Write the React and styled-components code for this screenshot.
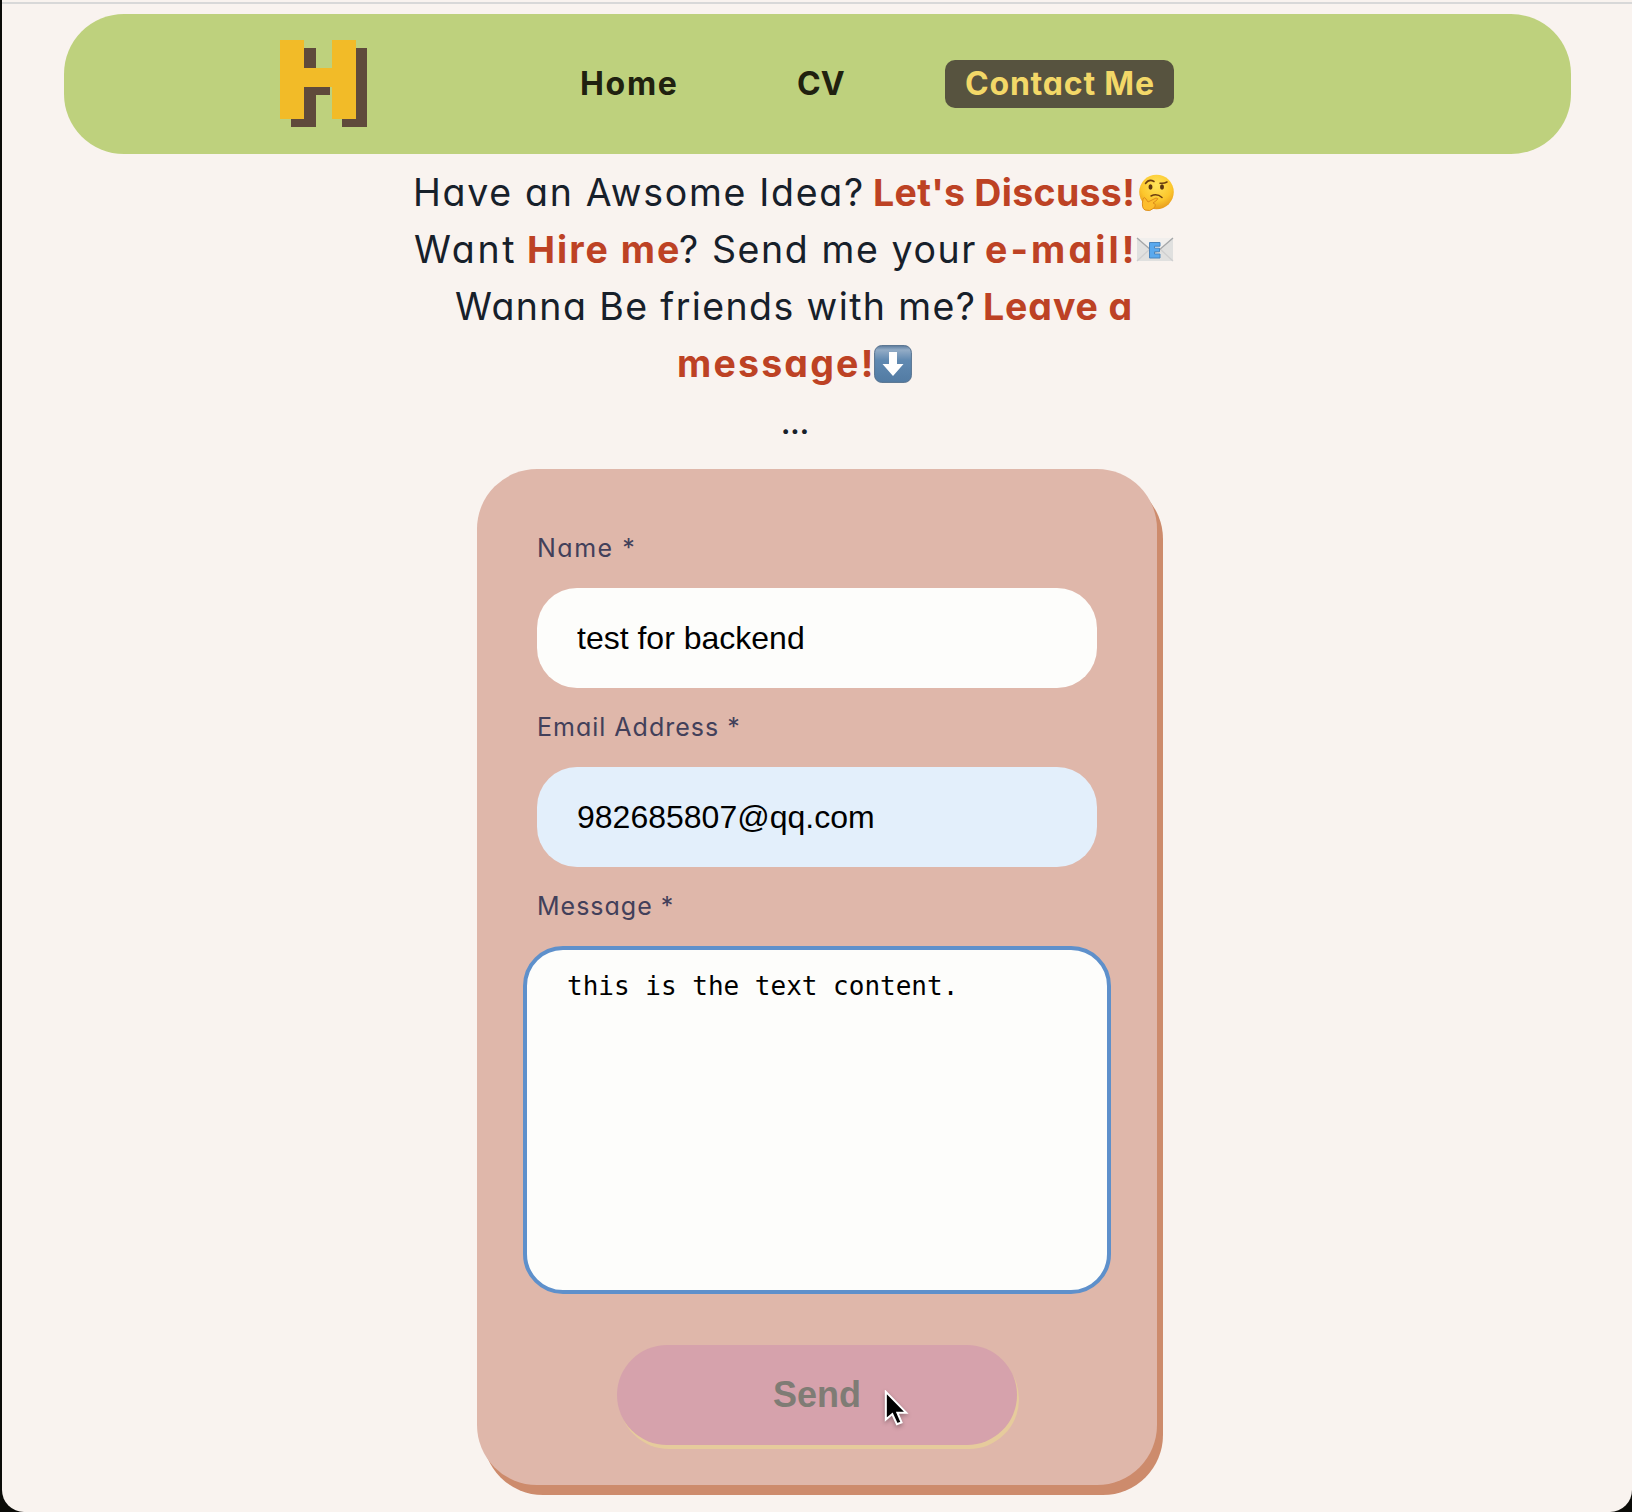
import React from "react";
import styled, { createGlobalStyle } from "styled-components";

const GlobalStyle = createGlobalStyle`
  *, *::before, *::after { box-sizing: border-box; }
  body { margin: 0; background: #000; }
`;

const geometric = `Inter, "Open Sans", sans-serif`;
const arial = `"Liberation Sans", Arial, sans-serif`;

const Page = styled.div`
  height: 1512px;
  padding-left: 2px;
  background: #0b0b08;
  font-family: ${geometric};
  font-feature-settings: "cv11" 1;
`;

const Window = styled.div`
  height: 1512px;
  padding-top: 2px;
  background: #f9f3ef;
  border-radius: 0 0 22px 22px;
  overflow: hidden;
`;

const Divider = styled.div`
  height: 2px;
  background: #d8d8d8;
`;

const Nav = styled.nav`
  display: flex;
  align-items: center;
  width: 1507px;
  height: 140px;
  margin: 10px 0 0 62px;
  padding-left: 216px;
  border-radius: 60px;
  background: #bed17d;
`;

const Logo = styled.svg`
  display: block;
  flex: none;
  width: 88px;
  height: 88px;
  margin-right: 192px;
`;

const NavLink = styled.a`
  flex: none;
  width: ${(p) => p.$width}px;
  height: 48px;
  margin-right: ${(p) => p.$gap || 0}px;
  padding-left: 20px;
  border-radius: 10px;
  background: ${(p) => (p.$active ? "#57533f" : "transparent")};
  color: ${(p) => (p.$active ? "#f3d868" : "#20210f")};
  font-size: 32px;
  font-weight: 700;
  line-height: 47px;
  letter-spacing: ${(p) => p.$track || 0}px;
  white-space: nowrap;
`;

const Intro = styled.header`
  display: flex;
  flex-direction: column;
  margin-top: 10px;
  color: #17202a;
  font-size: 37.5px;
  line-height: 57px;
`;

const Line = styled.div`
  display: flex;
  align-items: center;
  height: 57px;
  padding-left: ${(p) => p.$indent - 2}px;
  white-space: pre;
`;

const Words = styled.span`
  flex: none;
  width: ${(p) => p.$width}px;
  letter-spacing: ${(p) => p.$track || 0}px;
`;

const Strong = styled(Words)`
  color: #bd4224;
  font-weight: 700;
`;

const Emoji = styled.svg`
  display: block;
  flex: none;
  width: 38px;
  height: 38px;
`;

const Dots = styled.div`
  height: 72px;
  padding: 14px 0 0 779px;
  font-size: 28px;
  font-weight: 700;
  line-height: 36px;
  color: #17202a;
`;

const Card = styled.form`
  display: flex;
  flex-direction: column;
  width: 680px;
  height: 1016px;
  margin: 5px 0 0 475px;
  padding: 60px 60px 40px;
  border-radius: 60px;
  background: #dfb7aa;
  box-shadow: 6px 10px 0 #cd8b6c;
`;

const Label = styled.label`
  height: 39px;
  margin-bottom: 20px;
  color: #42405a;
  font-size: 25px;
  line-height: 38px;
  letter-spacing: ${(p) => p.$track || 0}px;
`;

const Input = styled.input`
  width: 560px;
  height: 100px;
  margin: 0 0 20px;
  padding: 0 40px;
  border: 0;
  border-radius: 40px;
  outline: 0;
  background: ${(p) => (p.$filled ? "#e3effb" : "#fdfdfb")};
  color: #000;
  font: 32px ${arial};
`;

const Message = styled.textarea`
  display: block;
  width: 588px;
  height: 348px;
  margin: 0 0 51px -14px;
  padding: 21px 40px;
  border: 4px solid #5e90cb;
  border-radius: 40px;
  outline: 0;
  resize: none;
  overflow: hidden;
  background: #fdfdfb;
  color: #000;
  font: 26px/31px "DejaVu Sans Mono", monospace;
`;

const SendButton = styled.button`
  position: relative;
  align-self: center;
  width: 400px;
  height: 100px;
  padding: 0;
  border: 0;
  border-radius: 50px;
  background: #d6a2ac;
  box-shadow: 2px 4px 0 #e6cb9c;
  color: #7f7c75;
  font: bold 36px ${arial};
`;

const Pointer = styled.svg`
  position: absolute;
  left: 266px;
  top: 45px;
  width: 26px;
  height: 37px;
  filter: drop-shadow(0 2px 2px rgba(0, 0, 0, 0.3));
`;

function ThinkingFace() {
  return (
    <Emoji viewBox="0 0 38 38">
      <defs>
        <radialGradient id="skin" cx="50%" cy="30%" r="70%">
          <stop offset="0" stopColor="#ffe45a" />
          <stop offset="0.65" stopColor="#fcc62c" />
          <stop offset="1" stopColor="#e79a1c" />
        </radialGradient>
      </defs>
      <circle cx="19.5" cy="18" r="17.3" fill="url(#skin)" />
      <ellipse cx="13.5" cy="13" rx="2" ry="2.7" fill="#5b3510" />
      <ellipse cx="25" cy="13" rx="2" ry="2.7" fill="#5b3510" />
      <path d="M8.5 9.5Q12 4.5 17 7.5M23 9.2Q27 9.8 30 8M14 22Q20 19 25 23.5" fill="none" stroke="#6b3d10" strokeWidth="1.5" strokeLinecap="round" />
      <path d="M6 25Q7 22 9 25L11 28 19 24Q22 24 20 26L16 29Q20 30 17 34Q13 38 8 36Q4 34 6 25Z" fill="#fdbd2c" stroke="#dd8e1c" strokeWidth="1" />
    </Emoji>
  );
}

function EmailEnvelope() {
  return (
    <Emoji viewBox="0 0 38 38">
      <rect x="1" y="7" width="36" height="23" fill="#e0e0df" />
      <path d="M1 30L14 18M37 30L24 18" stroke="#cfcfd0" strokeWidth="1.3" />
      <path d="M1 7L16 20Q19 22 22 20L37 7" fill="#f1efed" stroke="#a6a8aa" strokeWidth="1.4" />
      <path d="M13.5 11.5H24V15.2H18.5V17.2H23.5V20.8H18.5V23H24V27H13.5Z" fill="#5aa9ee" stroke="#4a85bd" strokeWidth="1" />
    </Emoji>
  );
}

function DownArrow() {
  return (
    <Emoji viewBox="0 0 38 38">
      <defs>
        <linearGradient id="key" x1="0" y1="0" x2="0" y2="1">
          <stop offset="0" stopColor="#5e7d9f" />
          <stop offset="0.12" stopColor="#93acc6" />
          <stop offset="0.4" stopColor="#6089b1" />
          <stop offset="1" stopColor="#527ba3" />
        </linearGradient>
      </defs>
      <rect x="0.6" y="0.6" width="36.8" height="36.8" rx="7" fill="url(#key)" stroke="#56718e" />
      <path d="M15 7H23V19H29.5L19 31 8.500 19H15Z" fill="#fff" />
    </Emoji>
  );
}

export default function App() {
  return (
    <Page>
      <GlobalStyle />
      <Window>
        <Divider />
        <Nav>
          <Logo viewBox="0 0 88 88" aria-label="H">
            <g fill="#5f4a3b">
              <rect x="11" y="8" width="25" height="79" />
              <rect x="62" y="8" width="25" height="79" />
              <rect x="24" y="36" width="26" height="19" />
            </g>
            <g fill="#f2bb28">
              <rect x="0" y="0" width="24" height="79" />
              <rect x="52" y="0" width="24" height="79" />
              <rect x="24" y="28" width="28" height="19" />
            </g>
          </Logo>
          <NavLink $width={137} $gap={80} $track={1.7}>Home</NavLink>
          <NavLink $width={88} $gap={80}>CV</NavLink>
          <NavLink $width={229} $track={0.8} $active>Contact Me</NavLink>
        </Nav>
        <Intro>
          <Line $indent={413}>
            <Words $width={460} $track={1.7}>Have an Awsome Idea?</Words>
            <Strong $width={264} $track={0.3}>Let's Discuss!</Strong>
            <ThinkingFace />
          </Line>
          <Line $indent={414}>
            <Words $width={113} $track={2.7}>Want</Words>
            <Strong $width={152} $track={2}>Hire me</Strong>
            <Words $width={306} $track={1.6}>? Send me your</Words>
            <Strong $width={151} $track={3.1}>e-mail!</Strong>
            <EmailEnvelope />
          </Line>
          <Line $indent={455}>
            <Words $width={528} $track={1.4}>Wanna Be friends with me?</Words>
            <Strong $width={150} $track={0.9}>Leave a</Strong>
          </Line>
          <Line $indent={677}>
            <Strong $width={197} $track={2.2}>message!</Strong>
            <DownArrow />
          </Line>
          <Dots>...</Dots>
        </Intro>
        <Card>
          <Label $track={1.5}>Name *</Label>
          <Input defaultValue="test for backend" />
          <Label $track={1}>Email Address *</Label>
          <Input defaultValue="982685807@qq.com" $filled />
          <Label $track={1}>Message *</Label>
          <Message defaultValue="this is the text content." spellCheck={false} />
          <SendButton type="button">
            Send
            <Pointer viewBox="0 0 28 40">
              <path d="M3 2V32L10 26L15 37L20 35L15.500 24.500H25Z" fill="#000" stroke="#fff" strokeWidth="2.200" />
            </Pointer>
          </SendButton>
        </Card>
      </Window>
    </Page>
  );
}
